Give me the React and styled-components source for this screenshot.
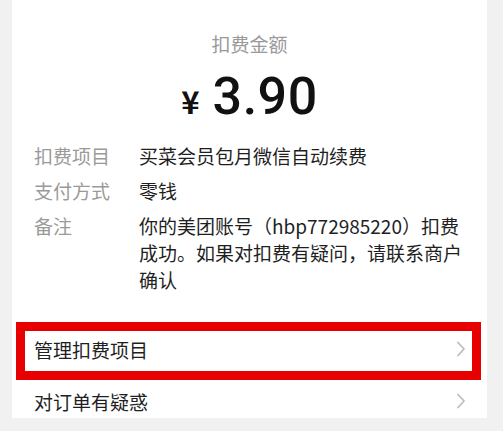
import React from 'react';
import styled, { createGlobalStyle } from 'styled-components';

const GlobalStyle = createGlobalStyle`
  html, body {
    margin: 0;
    padding: 0;
    background: #f1f1f1;
  }
  body {
    font-family: "Noto Sans CJK SC", "Noto Sans", sans-serif;
  }
`;

const Page = styled.div`
  width: 503px;
  height: 431px;
  overflow: hidden;
  background: #f1f1f1;
`;

const Card = styled.div`
  margin-left: 12px;
  width: 475px;
  height: 418px;
  background: #fff;
  overflow: hidden;
  display: flex;
  flex-direction: column;
`;

const Summary = styled.div`
  display: flex;
  flex-direction: column;
  align-items: center;
  padding-top: 30px;
`;

const SummaryLabel = styled.div`
  font-size: 19px;
  line-height: 28px;
  color: #9a9a9a;
`;

const Amount = styled.div`
  display: flex;
  align-items: baseline;
  gap: 13px;
  margin-top: 9px;
  color: #111;
  line-height: 60px;
`;

const Currency = styled.span`
  font-family: "Noto Sans CJK SC", sans-serif;
  font-size: 31px;
  font-weight: 700;
`;

const Value = styled.span`
  font-family: Roboto, "Liberation Sans", sans-serif;
  font-size: 52px;
  font-weight: 500;
  letter-spacing: 0.5px;
`;

const Details = styled.div`
  display: flex;
  flex-direction: column;
  gap: 7px;
  padding: 11px 22px 0 22px;
`;

const Row = styled.div`
  display: grid;
  grid-template-columns: 105px 326px;
  font-size: 19px;
  line-height: 28px;
`;

const Label = styled.div`
  color: #9a9a9a;
`;

const Text = styled.div`
  color: #1f1f1f;
  line-height: ${(p) => (p.$multi ? '27px' : '28px')};
`;

const Menu = styled.div`
  display: flex;
  flex-direction: column;
  margin-top: 30px;
`;

const MenuItem = styled.div`
  position: relative;
  display: flex;
  align-items: center;
  justify-content: space-between;
  height: 52px;
  padding: 0 21px 0 22px;
  font-size: 19px;
  color: #1f1f1f;

  ${(p) =>
    p.$highlight &&
    `
    &::after {
      content: '';
      position: absolute;
      left: 4px;
      right: 6px;
      top: -1px;
      bottom: -5px;
      border: 9px solid #e60000;
      pointer-events: none;
    }
  `}
`;

const Chevron = () => (
  <svg width="10" height="16" viewBox="0 0 10 16" fill="none">
    <path d="M2 1.5 L8 8 L2 14.5" stroke="#bdbdbd" strokeWidth="1.8" strokeLinecap="round" strokeLinejoin="round" />
  </svg>
);

const details = [
  { label: '扣费项目', value: '买菜会员包月微信自动续费' },
  { label: '支付方式', value: '零钱' },
  {
    label: '备注',
    value: '你的美团账号（hbp772985220）扣费成功。如果对扣费有疑问，请联系商户确认',
    multi: true,
  },
];

export default function App() {
  return (
    <Page>
      <GlobalStyle />
      <Card>
        <Summary>
          <SummaryLabel>扣费金额</SummaryLabel>
          <Amount>
            <Currency>¥</Currency>
            <Value>3.90</Value>
          </Amount>
        </Summary>
        <Details>
          {details.map((d) => (
            <Row key={d.label}>
              <Label>{d.label}</Label>
              <Text $multi={d.multi}>{d.value}</Text>
            </Row>
          ))}
        </Details>
        <Menu>
          <MenuItem $highlight>
            管理扣费项目
            <Chevron />
          </MenuItem>
          <MenuItem>
            对订单有疑惑
            <Chevron />
          </MenuItem>
        </Menu>
      </Card>
    </Page>
  );
}
